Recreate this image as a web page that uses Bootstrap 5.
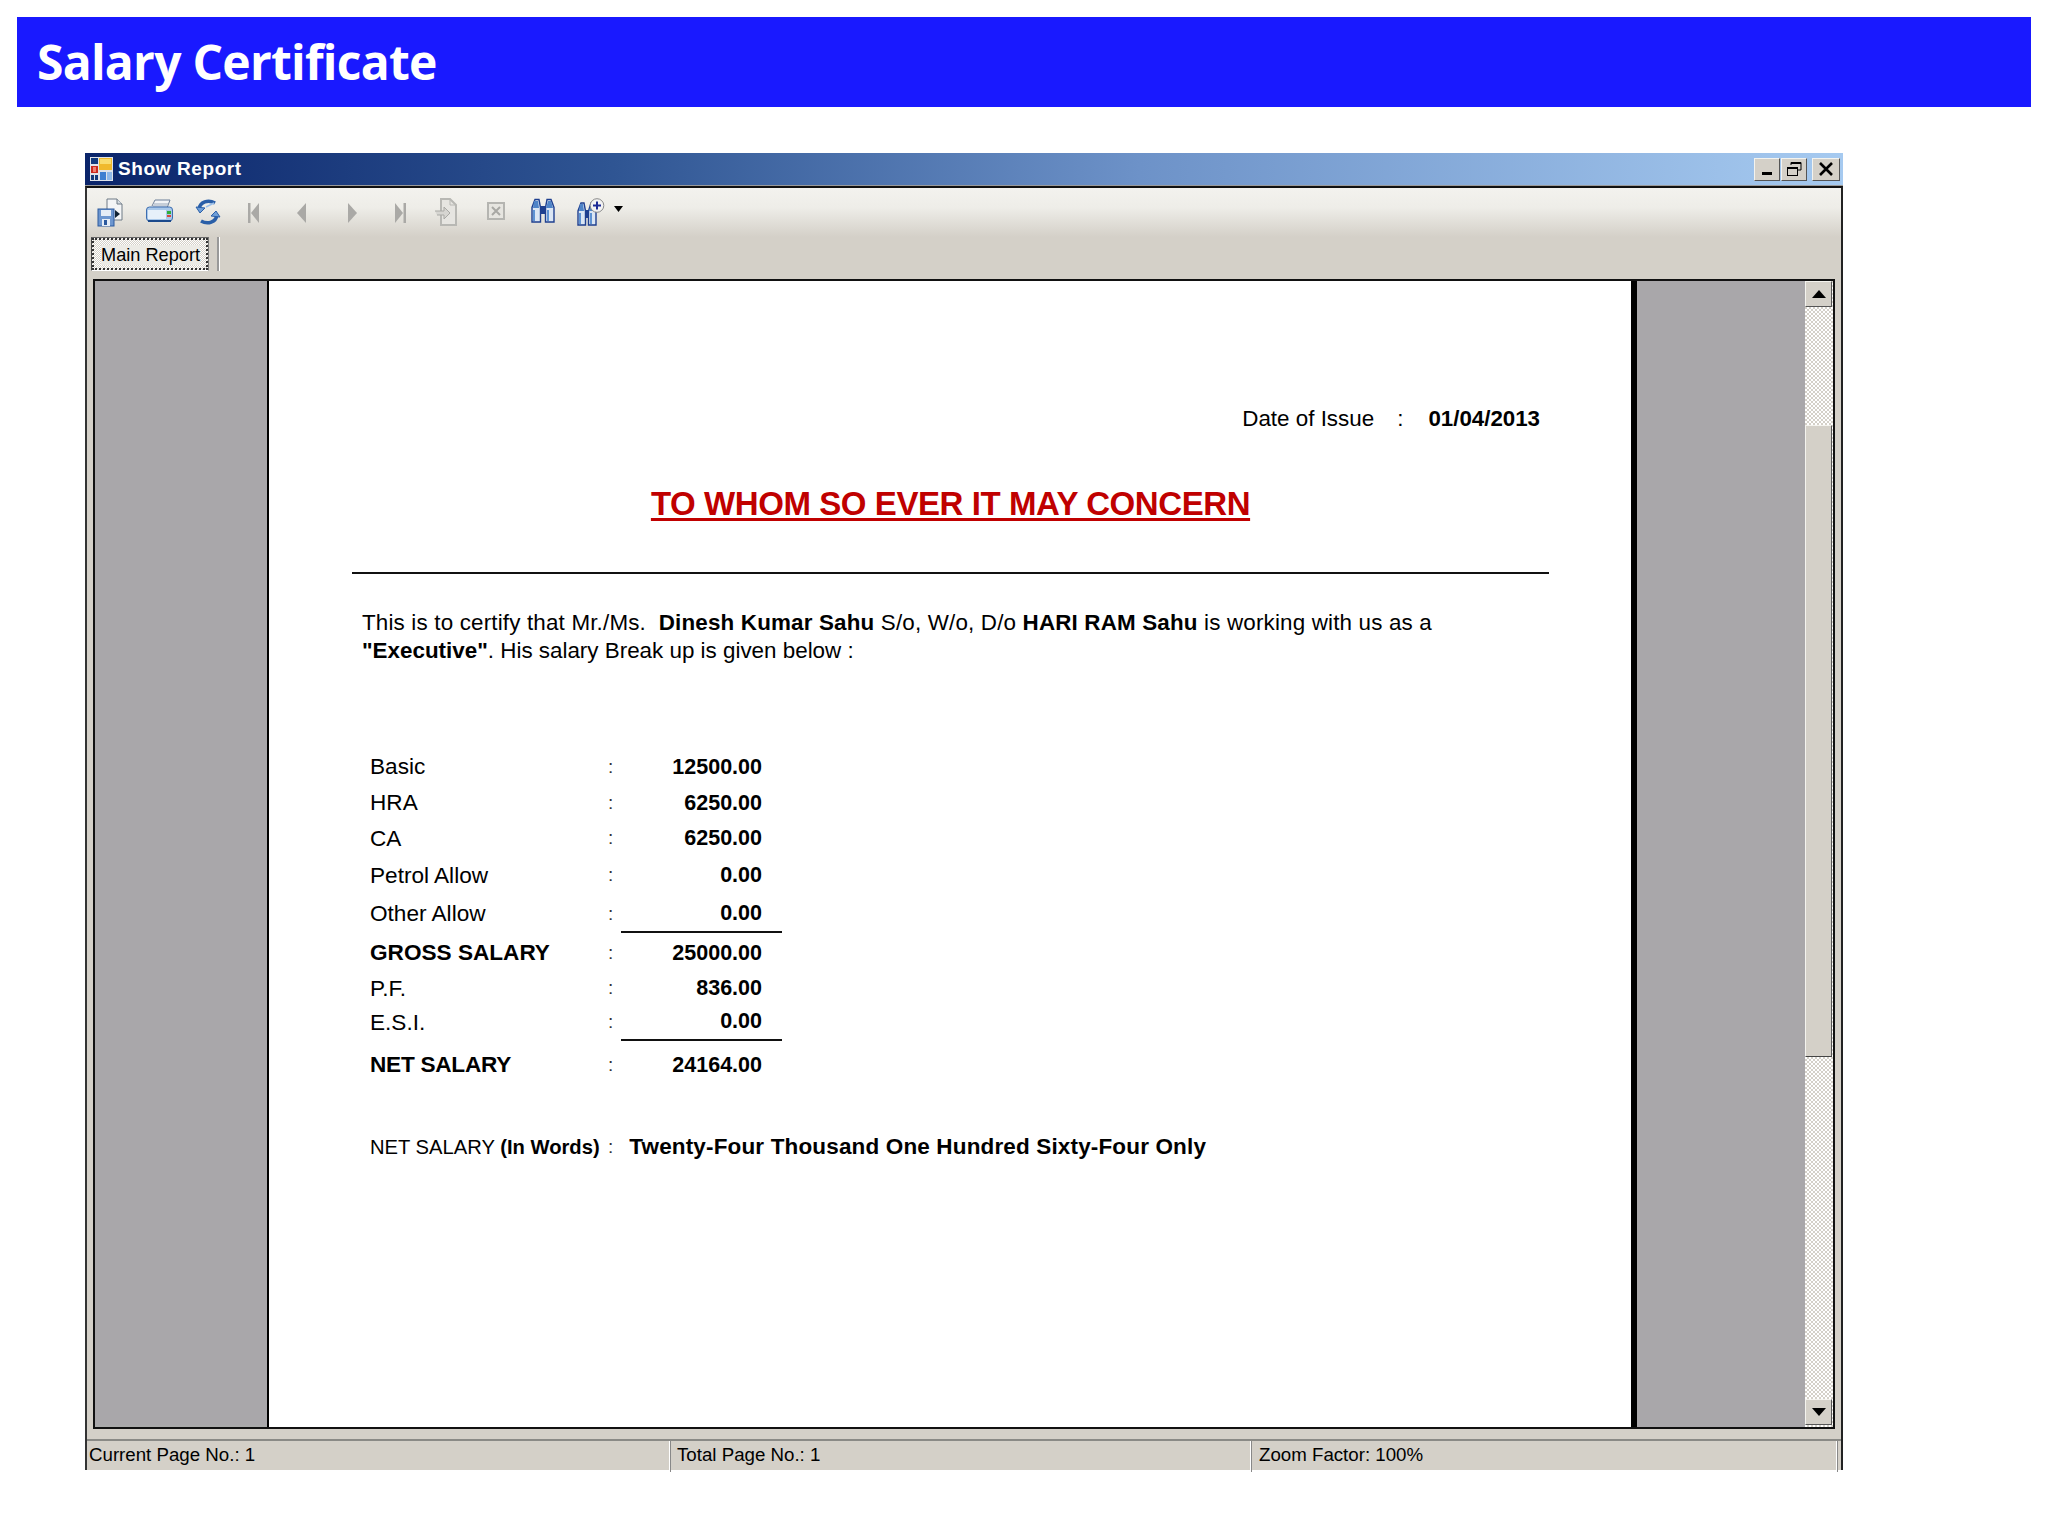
<!DOCTYPE html>
<html lang="en">
<head>
<meta charset="utf-8">
<title>Salary Certificate</title>
<link href="https://cdn.jsdelivr.net/npm/bootstrap@5.3.0/dist/css/bootstrap.min.css" rel="stylesheet">
<style>
html,body{background:#fff;}
body{margin:0;padding-top:17px;height:1536px;overflow:hidden;font-family:"Liberation Sans",Arial,sans-serif;color:#000;}
.sc-banner{margin:0 17px 0 17px;height:90px;background:#1919ff;color:#fff;padding-left:20px;font-family:"Open Sans",sans-serif;font-weight:700;font-size:48px;letter-spacing:-.74px;line-height:90px;}
.sc-window{margin:46px 0 0 85px;width:1758px;height:1317px;background:#d4d0c8;}
.sc-title{height:33px;background:linear-gradient(90deg,#0a246a 0,#2f5593 30%,#6d92c8 60%,#a6caf0 100%);color:#fff;padding-left:5px;font-weight:700;font-size:19px;letter-spacing:.6px;border-bottom:1px solid #999;}
.sc-title-text{margin-left:1px;}
.sc-winbtns{margin-right:3px;gap:1px;}
.sc-winbtn{width:26px;height:23px;background:#d4d0c8;border:1px solid;border-color:#f4f3ee #555 #555 #f4f3ee;padding:0;display:flex;align-items:center;justify-content:center;}
.sc-winbtn.sc-close{margin-left:4px;width:28px;}
.sc-body{height:1284px;border-left:2px solid #333;border-right:2px solid #222;border-top:2px solid #111;}
.sc-toolbar{height:49px;padding:10px 0 0 10px;background:linear-gradient(180deg,#f3f2ee 0,#eeede8 40%,#d4d0c8 100%);display:grid;grid-template-columns:48px 49px 54px 48px 51px 48px 39px 53px 44px 46px 37px auto;align-items:start;}
.sc-tabs{height:42px;padding-left:4px;}
.sc-tab{width:118px;height:34px;background:repeating-conic-gradient(#d4d0c8 0 25%,#fff 0 50%) 0 0/2px 2px;border:1px solid;border-color:#666 #777 #fff #444;font-size:18.2px;padding:5px 0 0 9px;line-height:24px;outline:2px dotted #333;outline-offset:-3px;}
.sc-tabtext{background:#ecebe6;}
.sc-tabsep{width:3px;height:34px;margin-left:8px;background:#999;border-right:1px solid #fff;}
.sc-viewer{margin:0 0 0 6px;width:1742px;height:1150px;border:2px solid #111;background:#a9a7aa;}
.sc-gutter{width:172px;flex:none;border-bottom:2px solid #aaa;}
.sc-gutter2{width:168px;flex:none;}
.sc-page{width:1370px;flex:none;background:#fff;border-left:2px solid #000;border-right:6px solid #000;}
.sc-date{margin-top:124px;height:28px;padding-right:91px;font-size:22.4px;line-height:28px;}
.sc-date-colon{margin:0 25px 0 23px;}
.sc-date-val{font-weight:700;font-size:22.3px;}
.sc-heading{margin:51px 82px 0 83px;height:40px;text-align:center;color:#c00000;font-weight:700;font-size:33px;letter-spacing:-.42px;line-height:40px;text-decoration:underline;text-underline-offset:3px;text-decoration-thickness:3px;}
.sc-rule{margin:48px 82px 0 83px;height:2px;background:#111;}
.sc-para{margin:35px 60px 0 93px;font-size:22.4px;line-height:28px;white-space:nowrap;}
.sc-line1{letter-spacing:.17px;}
.sc-sheet{margin:84px 0 0 101px;display:grid;grid-template-columns:238px 13px 161px;grid-template-rows:36px 36px 35px 39px 38px 40px 31px 37px 48px;font-size:22.6px;}
.sc-sheet>div{display:flex;align-items:center;}
.sc-colon{font-size:19px;color:#333;}
.sc-val{justify-content:flex-end;padding-right:20px;font-weight:700;font-size:21.5px;}
.sc-strong{font-weight:700;}
.sc-net{letter-spacing:-.25px;}
.sc-line{border-bottom:2px solid #111;}
.sc-words{margin:38px 0 0 101px;height:40px;}
.sc-wlabel{width:238px;font-size:20.2px;white-space:nowrap;}
.sc-wval{margin-left:16px;font-weight:700;font-size:22.5px;letter-spacing:.15px;}
.sc-scroll{width:28px;flex:none;background:repeating-conic-gradient(#d4d0c8 0 25%,#fff 0 50%) 0 0/4px 4px;padding:0 1px 2px 0;}
.sc-sbtn{height:26px;background:#d4d0c8;border:1px solid;border-color:#f4f3ee #555 #555 #f4f3ee;}
.sc-track{height:118px;}
.sc-thumb{height:632px;background:#d4d0c8;border:1px solid;border-color:#f4f3ee #555 #444 #f4f3ee;}
.sc-status{margin-top:10px;height:33px;border-top:2px solid #8a8a86;font-size:18.7px;}
.sc-cell{padding:2px 0 0 2px;line-height:24px;border-right:1px solid #fff;box-shadow:1px 0 0 #888;}
.sc-c1{width:583px;margin-right:5px;}
.sc-c2{width:576px;margin-right:5px;padding-left:2px;}
.sc-c3{flex:1;margin-right:4px;padding-left:3px;}
</style>
</head>
<body>
<div class="sc-banner">Salary Certificate</div>
<div class="sc-window">
  <div class="sc-title d-flex align-items-center">
    <svg width="23" height="24" viewBox="0 0 23 24" class="me-1 flex-shrink-0"><rect width="23" height="24" fill="#dfe3ea"/><rect x="1" y="1" width="7" height="6" fill="#123a7c"/><rect x="9" y="1" width="13" height="12" fill="#f0b92d"/><rect x="10" y="2" width="11" height="5" fill="#f9dc6e"/><rect x="1" y="9" width="7" height="7" fill="#c8281e"/><rect x="3" y="10" width="3" height="5" fill="#f08070"/><rect x="1" y="18" width="3" height="5" fill="#123a7c"/><rect x="5" y="18" width="3" height="5" fill="#123a7c"/><rect x="10" y="15" width="6" height="8" fill="#3f7fd0"/><rect x="17" y="15" width="5" height="8" fill="#8fb8e8"/></svg>
    <span class="sc-title-text">Show Report</span>
    <div class="d-flex ms-auto sc-winbtns">
      <div class="sc-winbtn"><svg width="14" height="14" viewBox="0 0 14 14"><rect x="2" y="10" width="10" height="3" fill="#000"/></svg></div>
      <div class="sc-winbtn"><svg width="16" height="16" viewBox="0 0 16 16" fill="none" stroke="#000"><path d="M5 4V1.500h10V9h-3" stroke-width="1"/><path d="M5 2h10" stroke-width="2"/><rect x="1.500" y="6.500" width="10" height="8"/><path d="M1 7h11" stroke-width="2"/></svg></div>
      <div class="sc-winbtn sc-close"><svg width="16" height="14" viewBox="0 0 16 14" stroke="#000" stroke-width="2.6"><path d="M2 1l12 12M14 1L2 13"/></svg></div>
    </div>
  </div>
  <div class="sc-body">
    <div class="sc-toolbar">
      <svg width="28" height="29" viewBox="0 0 28 29"><path d="M10 1h10l5 5v16H10z" fill="#f4f5f6" stroke="#6f7a86"/><path d="M20 1v5h5" fill="#d7dde3" stroke="#6f7a86"/><path d="M18 12l5 4-5 4z" fill="#123"/><rect x="1" y="11" width="16" height="17" fill="#6d96cf" stroke="#2c5a9e"/><rect x="4" y="12" width="10" height="6" fill="#e6edf6"/><rect x="5" y="21" width="8" height="7" fill="#e6edf6"/><rect x="7" y="22" width="3" height="5" fill="#2c5a9e"/></svg>
      <svg width="29" height="26" viewBox="0 0 29 26"><path d="M7 8l3-6h15l-3 8" fill="#f2f4f7" stroke="#6d7f98"/><path d="M9 6h14M8 8h14" stroke="#9aa8ba"/><rect x="1.500" y="9" width="26" height="14" rx="3" fill="#a9c8ea" stroke="#3d6db0"/><rect x="3" y="12" width="18" height="9" fill="#e6f0fa"/><rect x="22" y="13" width="4" height="3" fill="#2fae3c"/><rect x="22" y="17" width="4" height="2" fill="#d6483c"/><path d="M3 23h23" stroke="#1c4a8c" stroke-width="2"/></svg>
      <svg width="28" height="28" viewBox="0 0 28 28" fill="none"><path d="M5 11C6 4 14 1 21 5" stroke="#2a5fa8" stroke-width="3.500"/><path d="M2 9l4 6 5-5z" fill="#6f9fd8" stroke="#2a5fa8"/><path d="M23 17c-1 7-9 10-16 6" stroke="#2a5fa8" stroke-width="3.500"/><path d="M26 19l-4-6-5 5z" fill="#6f9fd8" stroke="#2a5fa8"/><path d="M12 9l8-4" stroke="#9cc0ea" stroke-width="1.500"/></svg>
      <svg width="11" height="22" viewBox="0 0 11 22" class="mt-1" fill="#aaa9a6"><rect y="1" width="2.500" height="20"/><path d="M11 1v20L3 11z"/></svg>
      <svg width="11" height="22" viewBox="0 0 11 22" class="mt-1" fill="#aaa9a6"><path d="M10 1v20L1 11z"/></svg>
      <svg width="11" height="22" viewBox="0 0 11 22" class="mt-1" fill="#aaa9a6"><path d="M1 1v20l9-10z"/></svg>
      <svg width="11" height="22" viewBox="0 0 11 22" class="mt-1" fill="#aaa9a6"><rect x="8.500" y="1" width="2.500" height="20"/><path d="M0 1v20l8-10z"/></svg>
      <svg width="25" height="29" viewBox="0 0 25 29"><path d="M7 1h9l6 6v20H7z" fill="#e6e5e1" stroke="#b8b8b4" stroke-width="2"/><path d="M16 1v6h6" fill="none" stroke="#b8b8b4"/><path d="M1 13h9v-4l6 6-6 6v-4H3" fill="#d6d5d1" stroke="#a9a9a5"/></svg>
      <svg width="18" height="18" viewBox="0 0 18 18" class="mt-1"><rect x="1" y="1" width="16" height="16" fill="#e6e5e0" stroke="#b5b5b1" stroke-width="2"/><path d="M5 5l8 8M13 5l-8 8" stroke="#a8a8a4" stroke-width="2"/></svg>
      <svg width="24" height="26" viewBox="0 0 24 26"><path d="M4 1.500h4l1.500 8V24H1V9.500z" fill="#dbe6f4" stroke="#1e3f8f" stroke-width="1.400"/><path d="M16 1.500h4l3 8V24h-8.500V9.500z" fill="#dbe6f4" stroke="#1e3f8f" stroke-width="1.400"/><rect x="9.500" y="8" width="5" height="8" fill="#1e3f8f"/><path d="M3 3h4l1 7H2zM17 3h3l2 7h-7z" fill="#4f84c8"/><path d="M2 12h2v11H2zM16 12h2v11h-2z" fill="#5f93d3"/></svg>
      <svg width="28" height="28" viewBox="0 0 28 28"><g transform="translate(1 3)"><path d="M3 2h3l1.500 8v14H0V10z" fill="#dbe6f4" stroke="#1e3f8f" stroke-width="1.400"/><path d="M13 2h3l2 8v14h-7.500V10z" fill="#dbe6f4" stroke="#1e3f8f" stroke-width="1.400"/><rect x="7.500" y="9" width="3" height="8" fill="#1e3f8f"/><path d="M2 3h3l1 7H1zM13 3h2l2 7h-6z" fill="#4f84c8"/><path d="M1 12h2v11H1zM12 12h2v11h-2z" fill="#5f93d3"/></g><circle cx="20" cy="7.500" r="6.800" fill="#f2f2f2" stroke="#8a8a8a"/><path d="M20 3.500v8M16 7.500h8" stroke="#1c2a96" stroke-width="2"/></svg>
      <svg width="9" height="6" viewBox="0 0 9 6" class="mt-2"><path d="M0 0h9L4.500 6z" fill="#000"/></svg>
    </div>
    <div class="sc-tabs d-flex">
      <div class="sc-tab"><span class="sc-tabtext">Main Report</span></div>
      <div class="sc-tabsep"></div>
    </div>
    <div class="sc-viewer d-flex">
      <div class="sc-gutter"></div>
      <div class="sc-page">
        <div class="sc-date d-flex justify-content-end"><span>Date of Issue</span><span class="sc-date-colon">:</span><span class="sc-date-val">01/04/2013</span></div>
        <div class="sc-heading">TO WHOM SO EVER IT MAY CONCERN</div>
        <div class="sc-rule"></div>
        <div class="sc-para"><span class="sc-line1">This is to certify that Mr./Ms.&nbsp; <b>Dinesh Kumar Sahu</b> S/o, W/o, D/o <b>HARI RAM Sahu</b> is working with us as a</span><br><b>"Executive"</b>. His salary Break up is given below :</div>
        <div class="sc-sheet">
          <div>Basic</div><div class="sc-colon">:</div><div class="sc-val">12500.00</div>
          <div>HRA</div><div class="sc-colon">:</div><div class="sc-val">6250.00</div>
          <div>CA</div><div class="sc-colon">:</div><div class="sc-val">6250.00</div>
          <div>Petrol Allow</div><div class="sc-colon">:</div><div class="sc-val">0.00</div>
          <div>Other Allow</div><div class="sc-colon">:</div><div class="sc-val sc-line">0.00</div>
          <div class="sc-strong">GROSS SALARY</div><div class="sc-colon">:</div><div class="sc-val">25000.00</div>
          <div>P.F.</div><div class="sc-colon">:</div><div class="sc-val">836.00</div>
          <div>E.S.I.</div><div class="sc-colon">:</div><div class="sc-val sc-line">0.00</div>
          <div class="sc-strong sc-net">NET SALARY</div><div class="sc-colon">:</div><div class="sc-val">24164.00</div>
        </div>
        <div class="sc-words d-flex align-items-center"><span class="sc-wlabel">NET SALARY <b>(In Words)</b></span><span class="sc-colon">:</span><span class="sc-wval">Twenty-Four Thousand One Hundred Sixty-Four Only</span></div>
      </div>
      <div class="sc-gutter2"></div>
      <div class="sc-scroll d-flex flex-column">
        <div class="sc-sbtn d-flex align-items-center justify-content-center"><svg width="14" height="8" viewBox="0 0 14 8"><path d="M7 0l7 8H0z" fill="#000"/></svg></div>
        <div class="sc-track"></div>
        <div class="sc-thumb"></div>
        <div class="flex-grow-1"></div>
        <div class="sc-sbtn d-flex align-items-center justify-content-center"><svg width="14" height="8" viewBox="0 0 14 8"><path d="M0 0h14L7 8z" fill="#000"/></svg></div>
      </div>
    </div>
    <div class="sc-status d-flex">
      <div class="sc-cell sc-c1">Current Page No.: 1</div>
      <div class="sc-cell sc-c2">Total Page No.: 1</div>
      <div class="sc-cell sc-c3">Zoom Factor: 100%</div>
    </div>
  </div>
</div>
<script src="https://cdn.jsdelivr.net/npm/bootstrap@5.3.0/dist/js/bootstrap.bundle.min.js"></script>
</body>
</html>
